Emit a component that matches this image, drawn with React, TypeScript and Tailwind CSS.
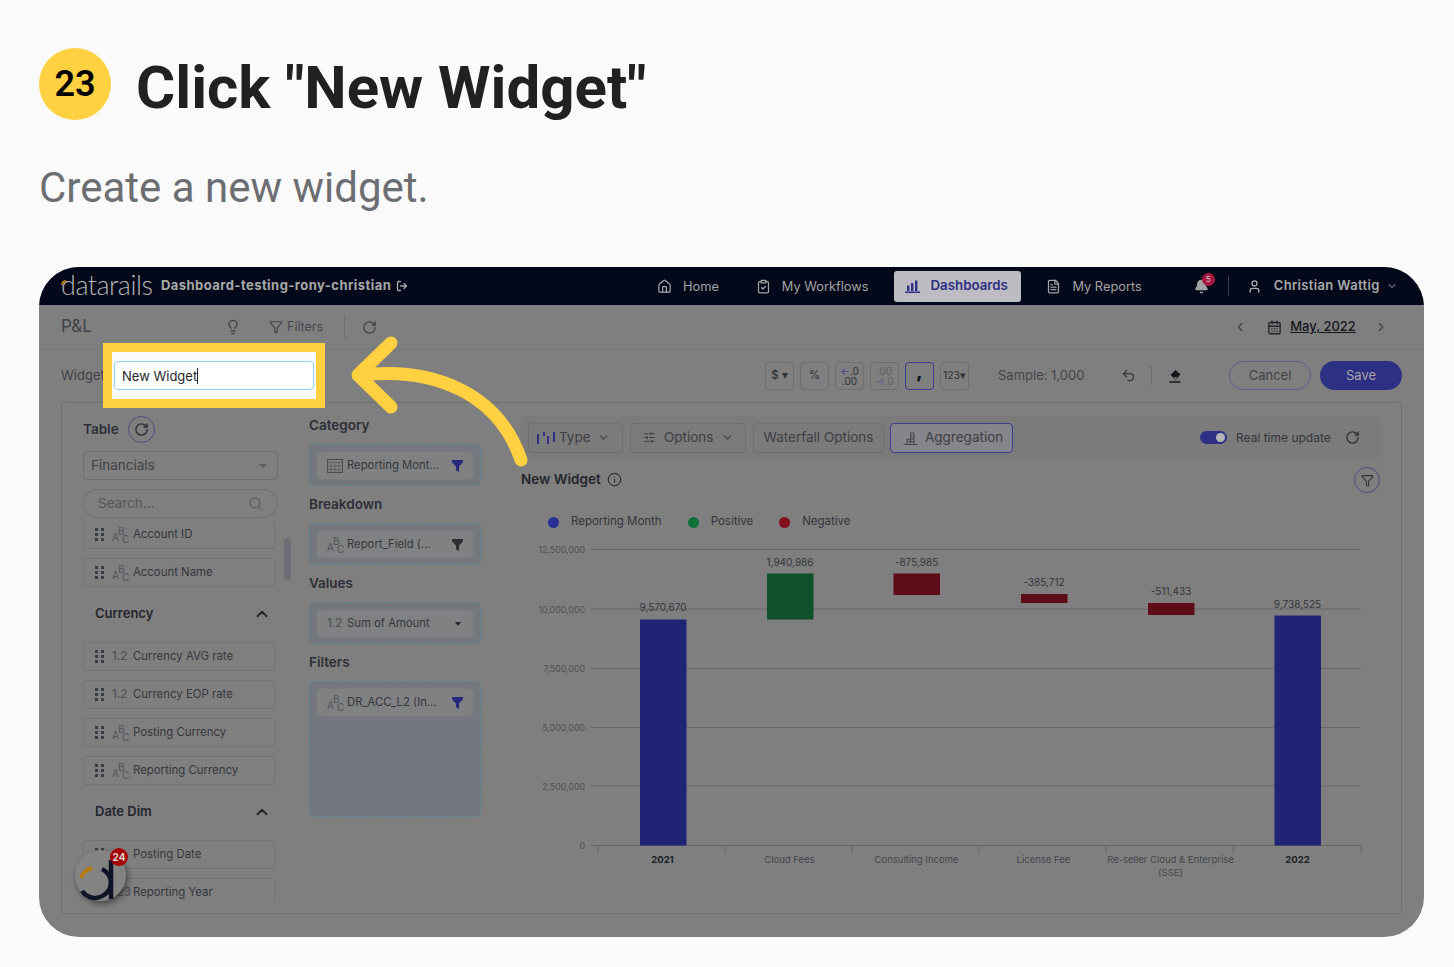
import React from 'react';
import {
  Home,
  ClipboardCheck,
  FileText,
  Bell,
  User,
  ChevronDown,
  ChevronUp,
  ChevronLeft,
  ChevronRight,
  Lightbulb,
  Filter,
  RotateCw,
  CalendarDays,
  Undo2,
  Search,
  SlidersHorizontal,
  Info,
  LogOut,
} from 'lucide-react';

function Grip() {
  return (
    <span className="grid grid-cols-2 gap-x-[3px] gap-y-[2px] w-[9px] shrink-0">
      {[0, 1, 2, 3, 4, 5].map((i) => (
        <span key={i} className="w-[3px] h-[3px] bg-[#3a3d45]" />
      ))}
    </span>
  );
}

function AbcIcon() {
  return (
    <span className="relative w-[16px] h-[16px] shrink-0 text-[#505359] text-[10px] leading-none">
      <span className="absolute left-0 top-[5px]">A</span>
      <span className="absolute left-[6px] top-[-1px]">B</span>
      <span className="absolute left-[10px] top-[7px]">C</span>
    </span>
  );
}

function NumIcon({ text = '1.2' }: { text?: string }) {
  return <span className="w-[16px] shrink-0 text-[#505359] text-[11.5px] leading-none font-medium">{text}</span>;
}

type FieldKind = 'abc' | 'num' | 'int' | 'hidden';

function Field({ label, kind, className = '' }: { label: string; kind: FieldKind; className?: string }) {
  return (
    <div className={`flex items-center h-[29px] w-[192px] border border-[#747474] rounded-[3px] pl-[11px] shrink-0 ${className}`}>
      <Grip />
      <span className="w-[8px]" />
      {kind === 'abc' && <AbcIcon />}
      {kind === 'num' && <NumIcon />}
      {kind === 'int' && <NumIcon text="123" />}
      {/* the icon of this row sits under the floating badge */}
      {kind === 'hidden' && <span className="w-[16px] shrink-0" />}
      <span className="ml-[5px] text-[11.4px] text-[#34373e] whitespace-nowrap">{label}</span>
    </div>
  );
}

function GroupHead({ label }: { label: string }) {
  return (
    <div className="flex items-center justify-between w-[192px] h-[52px] pl-[12px] pr-[4px] shrink-0 -mt-[9px] pt-[1px]">
      <span className="text-[13px] font-semibold text-[#23262e]">{label}</span>
      <ChevronUp size={18} strokeWidth={2.4} className="text-[#23262e]" />
    </div>
  );
}

function Funnel({ color }: { color: string }) {
  return (
    <svg width="11" height="12" viewBox="0 0 12 13" className="shrink-0">
      <path d="M0 0h12v2.4L7.7 7v6L4.3 11.2V7L0 2.4z" fill={color} />
    </svg>
  );
}

function Chip({ icon, label, right }: { icon: React.ReactNode; label: string; right: React.ReactNode }) {
  return (
    <div className="flex items-center h-[29px] border border-[#787a7d] bg-[#808182] rounded-[5px] pl-[10px] pr-[10px]">
      {icon}
      <span className="ml-[4px] text-[11.3px] text-[#34373e] whitespace-nowrap flex-1">{label}</span>
      {right}
    </div>
  );
}

function DropZone({ children, className = 'h-[42px]' }: { children: React.ReactNode; className?: string }) {
  return (
    <div className={`border border-dashed border-[#5b8794] bg-[#74787e] rounded-[5px] px-[6px] pt-[6px] ${className}`}>
      {children}
    </div>
  );
}

function FmtBtn({ children, active }: { children: React.ReactNode; active?: boolean }) {
  return (
    <div
      className={`flex flex-col items-center justify-center w-[29px] h-[28px] rounded-[4px] border text-[#2f3138] ${
        active ? 'border-[#3c3f8f]' : 'border-[#6f6f6f]'
      }`}
    >
      {children}
    </div>
  );
}

function ToolBtn({ children, className = '' }: { children: React.ReactNode; className?: string }) {
  return (
    <div className={`flex items-center h-[30px] border border-[#6f6f6f] rounded-[4px] text-[13.5px] text-[#3c3f46] ${className}`}>
      {children}
    </div>
  );
}

function NavItem({ icon, label, className = '' }: { icon: React.ReactNode; label: string; className?: string }) {
  return (
    <div className={`flex items-center gap-[11px] pt-[1px] text-[12.8px] text-[#a3a3a3] ${className}`}>
      {icon}
      <span className="whitespace-nowrap">{label}</span>
    </div>
  );
}

function ColHead({ children, className = '' }: { children: React.ReactNode; className?: string }) {
  return <div className={`h-[18px] text-[13.5px] font-semibold leading-[18px] text-[#2c2f37] ${className}`}>{children}</div>;
}

const yLabels = [
  { t: '12,500,000', y: 549.5 },
  { t: '10,000,000', y: 609 },
  { t: '7,500,000', y: 668.5 },
  { t: '5,000,000', y: 727.5 },
  { t: '2,500,000', y: 786 },
  { t: '0', y: 845.5 },
];

const bars = [
  { x: 640, y: 619.5, h: 226, c: '#1f2474', label: '9,570,670', ly: 611 },
  { x: 767, y: 573.5, h: 46, c: '#0f5229', label: '1,940,986', ly: 566 },
  { x: 893.5, y: 573.5, h: 21.5, c: '#5e0c17', label: '-875,985', ly: 566 },
  { x: 1021, y: 594, h: 9, c: '#5e0c17', label: '-385,712', ly: 586 },
  { x: 1148, y: 603, h: 12, c: '#5e0c17', label: '-511,433', ly: 595 },
  { x: 1274.5, y: 615.5, h: 230, c: '#1f2474', label: '9,738,525', ly: 608 },
];

const ticks = [598, 725, 852, 979, 1106, 1233, 1361];

function Chart() {
  return (
    <svg width="860" height="365" viewBox="521 535 860 365" className="block">
      {yLabels.map((l) => (
        <g key={l.t}>
          <line x1="590" x2="1361" y1={l.y} y2={l.y} stroke="#686868" strokeWidth="1" />
          <text x="585" y={l.y + 3.5} textAnchor="end" fontSize="8.8" fill="#4e5056">
            {l.t}
          </text>
        </g>
      ))}
      {ticks.map((x) => (
        <line key={x} x1={x} x2={x} y1="845.5" y2="854" stroke="#686868" />
      ))}
      {bars.map((b) => (
        <g key={b.label}>
          <rect x={b.x} y={b.y} width="46.5" height={b.h} fill={b.c} />
          <text x={b.x + 23} y={b.ly - 0.5} textAnchor="middle" fontSize="10" fill="#33353c">
            {b.label}
          </text>
        </g>
      ))}
      <text x="662.5" y="863" textAnchor="middle" fontSize="9.5" fontWeight="700" fill="#1d1f28">2021</text>
      <text x="789.5" y="863" textAnchor="middle" fontSize="9.5" fill="#44464d">Cloud Fees</text>
      <text x="916.5" y="863" textAnchor="middle" fontSize="9.5" fill="#44464d">Consulting Income</text>
      <text x="1043.5" y="863" textAnchor="middle" fontSize="9.5" fill="#44464d">License Fee</text>
      <text x="1170.5" y="863" textAnchor="middle" fontSize="9.5" fill="#44464d">Re-seller Cloud &amp; Enterprise</text>
      <text x="1170.5" y="876" textAnchor="middle" fontSize="9.5" fill="#44464d">(SSE)</text>
      <text x="1297.5" y="863" textAnchor="middle" fontSize="9.5" fontWeight="700" fill="#1d1f28">2022</text>
    </svg>
  );
}

function LegendDot({ color, label }: { color: string; label: string }) {
  return (
    <div className="flex items-center gap-[12px]">
      <span className={`w-[11px] h-[11px] rounded-full ${color}`} />
      <span className="text-[11.5px] text-[#33353c] whitespace-nowrap">{label}</span>
    </div>
  );
}

export default function App() {
  return (
    <div className="relative w-[1454px] h-[967px] overflow-hidden bg-[#fafafa] font-[Roboto,sans-serif]">
      {/* step heading */}
      <div className="flex items-center pl-[39px] pt-[48px]">
        <div className="flex items-center justify-center w-[72px] h-[72px] rounded-full bg-[#ffd040] text-[36px] font-semibold text-black">
          23
        </div>
        <h1 className="ml-[25px] h-[72px] pt-[8px] text-[60px] leading-[64px] font-bold text-[#212121] whitespace-nowrap">Click "New Widget"</h1>
      </div>
      <p className="ml-[39px] mt-[40px] text-[42px] leading-[56px] text-[#6c6e72] whitespace-nowrap">Create a new widget.</p>

      {/* dimmed app screenshot */}
      <div className="absolute left-[39px] top-[267px] w-[1385px] h-[670px] rounded-[40px] overflow-hidden bg-[#7f7f7f] font-[Inter,sans-serif]">
        {/* nav */}
        <div className="flex items-center h-[38px] bg-[#03081a] pl-[22px]">
          <span className="relative -mt-[3px] font-[Lato,sans-serif] font-light text-[27px] leading-none tracking-[-0.5px] text-[#b4b4b4] w-[91px]">
            datarails
            <span className="absolute left-[0px] top-[9px] w-[5px] h-[5px] border-l-2 border-t-2 border-[#b5790f] rounded-tl-[5px]" />
          </span>
          <span className="ml-[9px] text-[13px] tracking-[0.45px] font-bold text-[#a8a8a8] whitespace-nowrap w-[231px]">Dashboard-testing-rony-christian</span>
          <LogOut size={12} strokeWidth={2.6} className="text-[#a8a8a8] ml-[4px]" />
          <NavItem className="ml-[249px]" icon={<Home size={15} />} label="Home" />
          <NavItem className="ml-[37px]" icon={<ClipboardCheck size={15} />} label="My Workflows" />
          <div className="ml-[26px] flex items-center gap-[10px] w-[127px] h-[31px] rounded-[3px] bg-[#bcbcc2] pl-[11px] text-[13.3px] font-semibold text-[#2e3084]">
            <svg width="15" height="13" viewBox="0 0 15 13" className="shrink-0">
              <path d="M2 5.5h2.4V11H2zM6 3h2.4v8H6zM10 0.5h2.4V11H10zM0 11.5h15V13H0z" fill="#2e3084" />
            </svg>
            Dashboards
          </div>
          <NavItem className="ml-[25px]" icon={<FileText size={15} />} label="My Reports" />
          <div className="relative ml-[52px] text-[#a3a3a3]">
            <Bell size={15} fill="currentColor" />
            <span className="absolute -top-[6px] left-[8px] flex items-center justify-center w-[13px] h-[13px] rounded-full bg-[#a8173f] text-[8px] text-[#c9c9c9]">5</span>
          </div>
          <span className="ml-[19px] w-px h-[20px] bg-[#3b3e4a]" />
          <User size={15} className="ml-[18px] text-[#b0b0b0]" />
          <span className="ml-[12px] text-[13px] tracking-[0.35px] font-semibold text-[#a8a8a8] whitespace-nowrap">Christian Wattig</span>
          <ChevronDown size={12} className="ml-[6px] text-[#a3a3a3]" />
        </div>

        {/* P&L row */}
        <div className="flex items-center h-[45px] border-b border-[#777777] pl-[22px] text-[#3f4249]">
          <span className="text-[17px] w-[163px]">P&amp;L</span>
          <Lightbulb size={16} className="ml-[1px]" />
          <Filter size={14} className="ml-[28px]" />
          <span className="ml-[4px] text-[12.5px] text-[#45474e]">Filters</span>
          <span className="ml-[21px] w-px h-[24px] bg-[#707070]" />
          <RotateCw size={15} className="ml-[17px]" />
          <ChevronLeft size={14} className="ml-[856px]" />
          <CalendarDays size={15} strokeWidth={2.2} className="ml-[20px] text-[#23262e]" />
          <span className="ml-[8px] text-[13px] font-medium underline text-[#15171f]">May, 2022</span>
          <ChevronRight size={14} className="ml-[18px]" />
        </div>

        {/* widget row */}
        <div className="flex items-center h-[52px] pl-[22px] pb-[1px]">
          <span className="text-[13px] text-[#3f4249] w-[704px]">Widget</span>
          <div className="flex gap-[6px]">
            <FmtBtn>
              <span className="text-[11.5px] font-medium">$ ▾</span>
            </FmtBtn>
            <FmtBtn>
              <span className="text-[11.5px]">%</span>
            </FmtBtn>
            <FmtBtn>
              <span className="text-[10px] leading-[10px]"><span className="text-[#3c3f8f]">←</span>.0</span>
              <span className="text-[10px] leading-[10px]">.00</span>
            </FmtBtn>
            <FmtBtn>
              <span className="text-[10px] leading-[10px] text-[#5d5f66]">.00</span>
              <span className="text-[10px] leading-[10px] text-[#5d5f66]"><span className="text-[#5c5e9a]">→</span>.0</span>
            </FmtBtn>
            <FmtBtn active>
              <span className="-mt-[7px] text-[17px] leading-[15px] font-black text-[#15171f]">,</span>
            </FmtBtn>
            <FmtBtn>
              <span className="text-[10.5px] whitespace-nowrap">123▾</span>
            </FmtBtn>
          </div>
          <span className="ml-[29px] text-[13px] text-[#43454c] w-[86px] whitespace-nowrap">Sample: 1,000</span>
          <Undo2 size={15} className="ml-[37px] text-[#33353c]" />
          <span className="ml-[15px] w-px h-[19px] bg-[#6c6c6c]" />
          <svg width="14" height="14" viewBox="0 0 14 14" className="ml-[16px]">
            <path d="M7.5 1l5 4.5-5 5.2L2.5 6z" fill="#15171f" />
            <path d="M5 8.5l2.5 2.2L10 8.2" fill="#9a9a9a" stroke="#15171f" strokeWidth="0.8" />
            <path d="M1.5 13h11" stroke="#15171f" strokeWidth="1.3" />
          </svg>
          <div className="ml-[47px] flex items-center justify-center w-[82px] h-[29px] rounded-full border border-[#5d5f94] text-[13px] text-[#3f4249]">Cancel</div>
          <div className="ml-[9px] flex items-center justify-center w-[82px] h-[29px] rounded-full bg-[#2e3084] text-[13px] text-[#a5a5a5]">Save</div>
        </div>

        {/* main panel */}
        <div className="flex ml-[22px] w-[1341px] h-[512px] border border-[#707070] rounded-[4px] pt-[13px] pl-[21px]">
          {/* table column */}
          <div className="w-[195px] shrink-0">
            <div className="flex items-center gap-[9px] h-[26px]">
              <span className="text-[13.5px] font-semibold text-[#2c2f37]">Table</span>
              <span className="flex items-center justify-center w-[27px] h-[27px] rounded-full border border-[#4a4c80]">
                <RotateCw size={15} strokeWidth={2.2} className="text-[#2c2f37]" />
              </span>
            </div>
            <div className="flex items-center justify-between mt-[9px] h-[29px] border border-[#6f6f6f] rounded-[4px] pl-[7px] pr-[8px]">
              <span className="text-[13.5px] text-[#3f4249]">Financials</span>
              <span className="w-0 h-0 border-x-[4px] border-x-transparent border-t-[4px] border-t-[#5c5c5c] mr-[2px]" />
            </div>
            <div className="flex items-center justify-between mt-[9px] h-[29px] border border-[#6f6f6f] rounded-full pl-[14px] pr-[14px]">
              <span className="text-[13.5px] text-[#55575d]">Search...</span>
              <Search size={15} className="text-[#5d5d5d]" />
            </div>
            {/* fields list */}
            <div className="flex mt-[1px]">
              <div className="flex flex-col gap-[9px] h-[381px] overflow-hidden w-[192px] shrink-0">
                <Field kind="abc" label="Account ID" className="mt-[1px] !border-t-transparent" />
                <Field kind="abc" label="Account Name" />
                <GroupHead label="Currency" />
                <Field kind="num" label="Currency AVG rate" className="-mt-[6px]" />
                <Field kind="num" label="Currency EOP rate" />
                <Field kind="abc" label="Posting Currency" />
                <Field kind="abc" label="Reporting Currency" />
                <GroupHead label="Date Dim" />
                <Field kind="hidden" label="Posting Date" className="-mt-[6px]" />
                <Field kind="int" label="Reporting Year" />
              </div>
              <div className="ml-[9px] mt-[19px] w-[7px] h-[42px] rounded-full bg-[#6b6f75] shrink-0" />
            </div>
          </div>

          {/* category column */}
          <div className="ml-[31px] w-[172px] shrink-0">
            <ColHead>Category</ColHead>
            <div className="mt-[10px]">
              <DropZone>
                <Chip
                  icon={
                    <svg width="16" height="14" viewBox="0 0 16 14" className="shrink-0">
                      <rect x="0.5" y="0.5" width="15" height="13" fill="none" stroke="#4a4a4a" />
                      <path d="M0 3.5h16M4 3.5V14M8 3.5V14M12 3.5V14M0 7h16M0 10.5h16" stroke="#5d5d5d" strokeWidth="0.8" />
                    </svg>
                  }
                  label="Reporting Mont..."
                  right={<Funnel color="#27297c" />}
                />
              </DropZone>
            </div>
            <ColHead className="mt-[9px]">Breakdown</ColHead>
            <div className="mt-[10px]">
              <DropZone>
                <Chip icon={<AbcIcon />} label="Report_Field (..." right={<Funnel color="#2b2d33" />} />
              </DropZone>
            </div>
            <ColHead className="mt-[9px]">Values</ColHead>
            <div className="mt-[10px]">
              <DropZone>
                <Chip
                  icon={<NumIcon />}
                  label="Sum of Amount"
                  right={<span className="w-0 h-0 mr-[2px] border-x-[3.5px] border-x-transparent border-t-[4px] border-t-[#23262e]" />}
                />
              </DropZone>
            </div>
            <ColHead className="mt-[9px]">Filters</ColHead>
            <div className="mt-[10px]">
              <DropZone className="h-[136px]">
                <Chip icon={<AbcIcon />} label="DR_ACC_L2 (In..." right={<Funnel color="#27297c" />} />
              </DropZone>
            </div>
          </div>

          {/* chart column */}
          <div className="ml-[40px] w-[860px] shrink-0">
            <div className="flex items-center h-[43px] bg-[#7b7b7b] rounded-[4px] pl-[7px] pr-[21px]">
              <ToolBtn className="w-[95px] pl-[8px] gap-[4px]">
                <svg width="18" height="12" viewBox="0 0 18 12" className="shrink-0">
                  <path d="M1 2v10M7 0v4M11 4v8M17 0v10" stroke="#2e3084" strokeWidth="2" />
                </svg>
                Type
                <ChevronDown size={13} className="ml-[2px]" />
              </ToolBtn>
              <ToolBtn className="ml-[7px] w-[116px] pl-[12px] gap-[8px]">
                <SlidersHorizontal size={13} />
                Options
                <ChevronDown size={13} />
              </ToolBtn>
              <ToolBtn className="ml-[7px] w-[131px] justify-center">Waterfall Options</ToolBtn>
              <ToolBtn className="ml-[6px] w-[123px] pl-[12px] gap-[7px] !border-[#3c3f8f] bg-[#85858b]">
                <svg width="15" height="14" viewBox="0 0 15 14" className="shrink-0">
                  <path d="M0.5 13.5h14M4 13.5V8h7v5.5M7.5 13.5V2h3.5v6M4 10.5h7M7.5 5h3.5" fill="none" stroke="#3c3f46" strokeWidth="0.9" />
                </svg>
                Aggregation
              </ToolBtn>
              <div className="ml-[187px] flex items-center w-[27px] h-[13px] rounded-full bg-[#2e3084] justify-end pr-[2px]">
                <span className="w-[9px] h-[9px] rounded-full bg-[#b5b5b5]" />
              </div>
              <span className="ml-[9px] text-[12px] text-[#33353c] whitespace-nowrap w-[95px]">Real time update</span>
              <RotateCw size={15} strokeWidth={2.2} className="ml-[14px] text-[#33353c]" />
            </div>
            <div className="flex items-center justify-between h-[26px] mt-[7px] pr-[1px]">
              <div className="flex items-center gap-[6px]">
                <span className="text-[13.5px] font-semibold text-[#23262e]">New Widget</span>
                <Info size={15} className="text-[#33353c]" />
              </div>
              <span className="mt-[2px] flex items-center justify-center w-[26px] h-[26px] rounded-full border border-[#4a4c80]">
                <Filter size={13} className="text-[#33353c]" />
              </span>
            </div>
            <div className="flex items-center gap-[26px] h-[20px] mt-[20px] pl-[27px]">
              <LegendDot color="bg-[#2b3192]" label="Reporting Month" />
              <LegendDot color="bg-[#107038]" label="Positive" />
              <LegendDot color="bg-[#85101f]" label="Negative" />
            </div>
            <div className="mt-[3px]">
              <Chart />
            </div>
          </div>
        </div>
      </div>

      {/* floating assistant */}
      <div className="absolute left-[75px] top-[850px] w-[51px] h-[51px] rounded-full bg-[#838383] shadow-[2px_3px_6px_rgba(0,0,0,0.45)]">
        <svg width="51" height="51" viewBox="0 0 51 51">
          <path d="M6 28a16 16 0 0 1 11-10" fill="none" stroke="#b5790f" strokeWidth="4" />
          <path d="M7 41A16 16 0 0 0 36 34A16 16 0 0 0 27 19" fill="none" stroke="#0e1426" strokeWidth="4.5" />
          <path d="M36 10v39" stroke="#0e1426" strokeWidth="4.5" />
        </svg>
        <span className="absolute -top-[2px] left-[35px] flex items-center justify-center w-[18px] h-[18px] rounded-full bg-[#a80000] text-[10px] font-bold text-[#d8d8d8] font-[Inter,sans-serif]">24</span>
      </div>

      {/* highlight */}
      <div className="absolute left-[103px] top-[343px] w-[222px] h-[65px] border-[9px] border-[#ffd040] bg-[#fafafa] font-[Inter,sans-serif]">
        <div className="flex items-center mx-[2px] my-[9px] h-[29px] w-[200px] bg-white rounded-[4px] border border-[#8fd4f2] pl-[7px]">
          <span className="text-[13px] text-[#24262c] whitespace-nowrap border-r border-[#24262c] leading-[16px]">New Widget</span>
        </div>
      </div>

      {/* arrow */}
      <svg className="absolute left-[340px] top-[330px]" width="200" height="145" viewBox="340 330 200 145">
        <path
          d="M362 375C432 367 498 392 521 460"
          fill="none"
          stroke="#ffd040"
          strokeWidth="13"
          strokeLinecap="round"
        />
        <path
          d="M391 343L358 375L391 407"
          fill="none"
          stroke="#ffd040"
          strokeWidth="13"
          strokeLinecap="round"
          strokeLinejoin="round"
        />
      </svg>
    </div>
  );
}
